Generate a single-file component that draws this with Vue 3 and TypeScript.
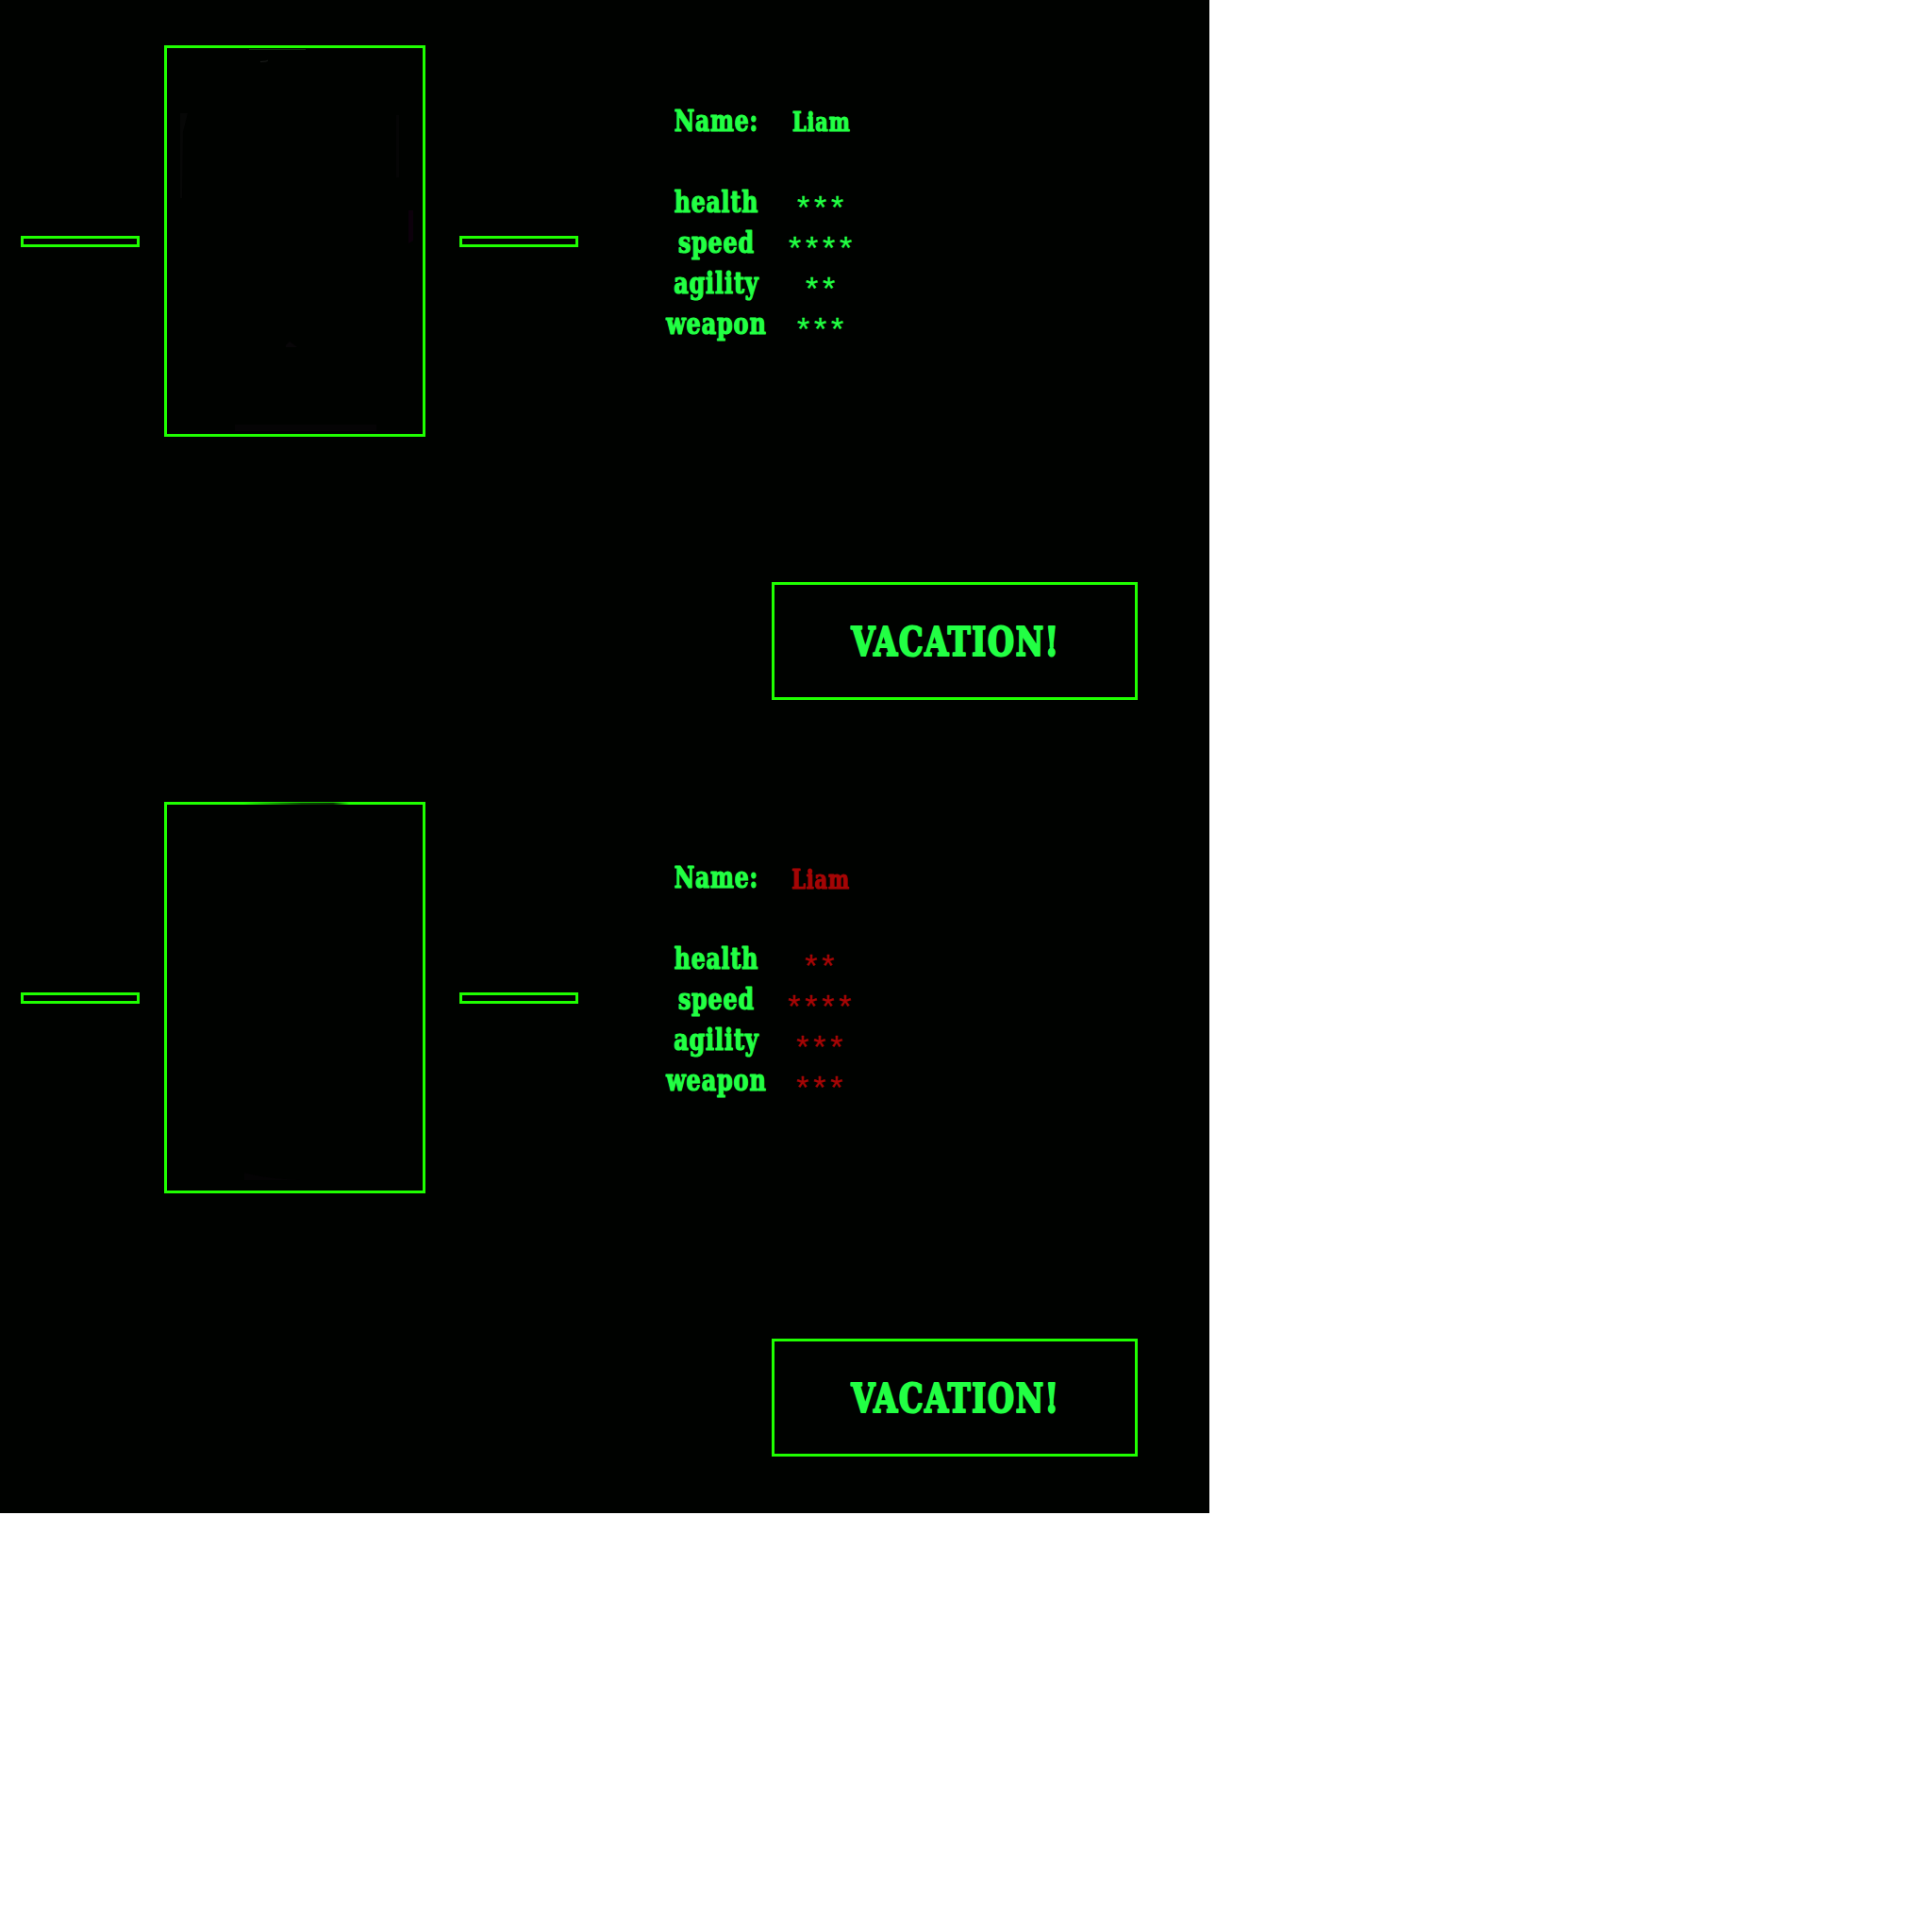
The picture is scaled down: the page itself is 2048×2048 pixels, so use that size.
<script setup lang="ts">
interface Stat {
  label: string
  width: number
  value: string
}
interface Player {
  id: string
  tone: string
  stats: Stat[]
}

const makeStats = (health: number, speed: number, agility: number, weapon: number): Stat[] => [
  { label: 'Name:', width: 89.5, value: 'Liam' },
  { label: '', width: 0, value: '' },
  { label: 'health', width: 89.5, value: '*'.repeat(health) },
  { label: 'speed', width: 81, value: '*'.repeat(speed) },
  { label: 'agility', width: 90.5, value: '*'.repeat(agility) },
  { label: 'weapon', width: 106.5, value: '*'.repeat(weapon) },
]

const players: Player[] = [
  { id: 'one', tone: 'green', stats: makeStats(3, 4, 2, 3) },
  { id: 'two', tone: 'red', stats: makeStats(2, 4, 3, 3) },
]
</script>

<template>
  <main class="game">
    <section v-for="p in players" :key="p.id" class="screen">
      <div class="top">
        <div class="slot"></div>
        <div class="portrait">
          <svg v-if="p.id === 'one'" class="shade" width="277" height="415" viewBox="0 0 277 415">
            <path d="M90 4.5h60" stroke="#123012" />
            <path d="M102 17.5l6-.5 2-1" stroke="#1c1f1c" fill="none" />
            <path d="M17 72h8l-5 20-1 70h-2z" fill="#060706" />
            <path d="M246 74h3v66h-3z" fill="#050505" />
            <path d="M259 175h5v32l-5 3z" fill="#0c000b" />
            <path d="M129 318l4-4 8 6h-12z" fill="#080608" />
            <path d="M75 402h150v7H75z" fill="#050405" />
          </svg>
          <svg v-else class="shade" width="277" height="415" viewBox="0 0 277 415">
            <defs>
              <linearGradient id="fade">
                <stop offset="0" stop-color="#000200" stop-opacity="0" />
                <stop offset=".55" stop-color="#000200" stop-opacity=".72" />
                <stop offset=".85" stop-color="#000200" stop-opacity=".8" />
                <stop offset="1" stop-color="#000200" stop-opacity="0" />
              </linearGradient>
            </defs>
            <rect x="84" y="1" width="112" height="2" fill="url(#fade)" />
            <rect x="84" y="0" width="112" height="1" fill="url(#fade)" opacity=".35" />
            <path d="M85 393q20 6 60 8H85z" fill="#040304" />
          </svg>
        </div>
        <div class="slot"></div>
        <div class="stats">
          <div v-for="(s, i) in p.stats" :key="i" class="row">
            <svg class="cell" width="106" height="43">
              <text
                v-if="s.label"
                class="label"
                x="53.4"
                y="29.8"
                :textLength="s.width"
                lengthAdjust="spacingAndGlyphs"
              >{{ s.label }}</text>
            </svg>
            <svg class="cell value" :class="p.tone" width="106" height="43">
              <text
                v-if="i === 0"
                class="name"
                x="53.8"
                y="29.5"
                textLength="61.5"
                lengthAdjust="spacingAndGlyphs"
              >{{ s.value }}</text>
              <text v-else-if="s.value" class="stars" x="55" y="36">{{ s.value }}</text>
            </svg>
          </div>
        </div>
      </div>
      <button class="action" type="button">
        <svg width="382" height="119">
          <text x="192" y="74.6" textLength="221" lengthAdjust="spacingAndGlyphs">VACATION!</text>
        </svg>
      </button>
    </section>
  </main>
</template>

<style>
body {
  background: #fff;
}
</style>

<style scoped>
.game {
  width: 1282px;
  font-family: "DejaVu Serif Condensed", "DejaVu Serif", serif;
  font-weight: 700;
  background: #000200;
}
.screen {
  box-sizing: border-box;
  height: 802px;
  padding: 48px 0 0 22px;
}
.top {
  display: flex;
  align-items: flex-start;
  height: 569px;
}
.slot,
.portrait,
.action {
  box-sizing: border-box;
  border: 3px solid #1fff00;
}
.slot {
  width: 126px;
  height: 12px;
  margin-top: 202px;
}
.portrait {
  position: relative;
  width: 277px;
  height: 415px;
  margin: 0 36px 0 26px;
}
.shade {
  position: absolute;
  left: -3px;
  top: -3px;
}
.stats {
  margin: 61px 0 0 93px;
}
.row {
  display: flex;
  gap: 5px;
  height: 43px;
}
.cell {
  display: block;
  overflow: visible;
}
text {
  fill: #22ff44;
  stroke: #22ff44;
  stroke-width: 1.2px;
  stroke-linejoin: round;
  text-anchor: middle;
  letter-spacing: 1px;
}
.label {
  font-size: 31px;
}
.name {
  font-size: 27px;
}
.stars {
  font-family: "Liberation Sans", sans-serif;
  font-weight: 400;
  font-size: 34px;
  letter-spacing: 4.77px;
  stroke-width: 0.3px;
}
.red text {
  fill: #a50505;
  stroke: #a50505;
}
.red .name {
  transform: translate(-1px, 1px);
}
.red .stars {
  transform: translate(-1px, 2px);
}
.action {
  display: block;
  width: 388px;
  height: 125px;
  margin: 0 0 0 796px;
  padding: 0;
  background: transparent;
  font: inherit;
}
.action svg {
  display: block;
}
.action text {
  font-size: 42px;
  stroke-width: 2.2px;
  letter-spacing: 2px;
}
</style>
